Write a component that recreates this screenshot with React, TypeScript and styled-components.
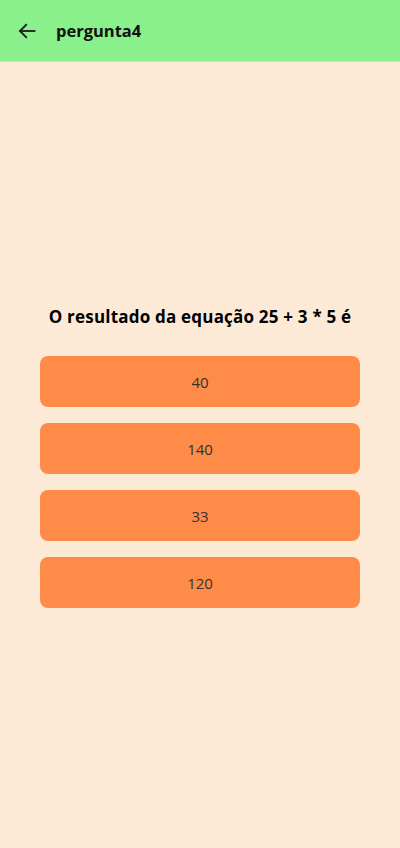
import React from "react";
import styled, { createGlobalStyle } from "styled-components";

const Global = createGlobalStyle`
  html, body { margin: 0; padding: 0; }
  body { font-family: "Open Sans", "Noto Sans", sans-serif; background: #fdead6; }
`;

const Page = styled.div`
  min-height: 100vh;
  display: flex;
  flex-direction: column;
  background: #fdead6;
`;

const Header = styled.header`
  height: 61px;
  background: #89f08b;
  display: flex;
  align-items: center;
  padding: 0 16px;
  box-shadow: 0 1px 1px rgba(0, 0, 0, 0.08);
  box-sizing: border-box;
`;

const BackButton = styled.button`
  width: 22px;
  height: 22px;
  padding: 0;
  border: 0;
  background: transparent;
  display: flex;
  align-items: center;
  justify-content: center;
  margin-right: 18px;
  color: #1c1c1c;
`;

const Title = styled.h1`
  margin: 0;
  font-size: 16.5px;
  font-weight: 700;
  color: #111;
  font-family: "Open Sans", "Noto Sans", sans-serif;
`;

const Main = styled.main`
  flex: 1;
  display: flex;
  flex-direction: column;
  align-items: center;
  justify-content: center;
  padding-top: 4px;
`;

const Question = styled.h2`
  margin: 0 0 27px;
  font-size: 17px;
  line-height: 24px;
  font-weight: 700;
  letter-spacing: 0.2px;
  color: #000;
  text-align: center;
`;

const Options = styled.div`
  display: flex;
  flex-direction: column;
  gap: 16px;
  width: 320px;
`;

const Option = styled.button`
  height: 51px;
  border: 0;
  border-radius: 8px;
  background: #ff8b48;
  color: #333;
  font-family: "Open Sans", "Noto Sans", sans-serif;
  font-size: 15px;
  cursor: pointer;
`;

export default function App() {
  const answers = ["40", "140", "33", "120"];
  return (
    <>
      <Global />
      <Page>
        <Header>
          <BackButton aria-label="voltar">
            <svg width="20" height="20" viewBox="0 0 24 24" fill="none" stroke="currentColor" strokeWidth="2.2" strokeLinecap="square">
              <path d="M21 12H4" />
              <path d="M11 4.5L3.5 12L11 19.5" />
            </svg>
          </BackButton>
          <Title>pergunta4</Title>
        </Header>
        <Main>
          <Question>O resultado da equação 25 + 3 * 5 é</Question>
          <Options>
            {answers.map((a) => (
              <Option key={a}>{a}</Option>
            ))}
          </Options>
        </Main>
      </Page>
    </>
  );
}
